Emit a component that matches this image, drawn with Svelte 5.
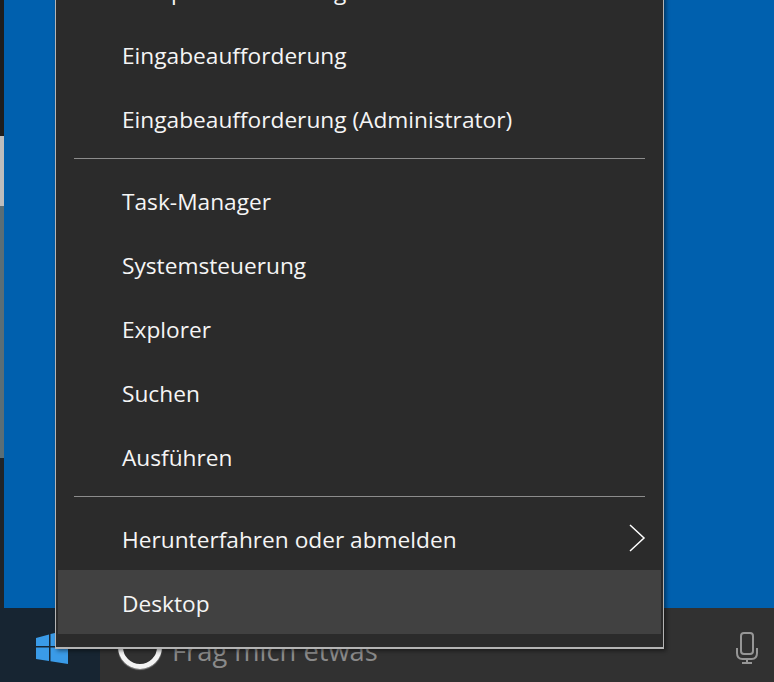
<script>
  const groups = [
    [{ t: 'Computerverwaltung' }, { t: 'Eingabeaufforderung' }, { t: 'Eingabeaufforderung (Administrator)' }],
    [{ t: 'Task-Manager' }, { t: 'Systemsteuerung' }, { t: 'Explorer' }, { t: 'Suchen' }, { t: 'Ausführen' }],
    [{ t: 'Herunterfahren oder abmelden', arrow: true }, { t: 'Desktop', active: true }]
  ];
</script>

<div class="screen">
  <div class="strip">
    <div class="s1"></div>
    <div class="s2"></div>
    <div class="s3"></div>
    <div class="s4"></div>
  </div>
  <div class="desktop"></div>

  <div class="taskbar">
    <div class="start">
      <svg width="34" height="38" viewBox="0 0 34 38"><path fill="#3a9be8" d="M1 12 14 8.500V20H1ZM15.500 8 33 4V20H15.500ZM1 21.500H14V35L1 33ZM15.500 21.500H33V38L15.500 35.300Z"/></svg>
    </div>
    <div class="search">
      <span class="ring"></span>
      <span class="prompt">Frag mich etwas</span>
      <svg class="mic" width="22" height="32" viewBox="0 0 22 32" fill="none" stroke="#969696" stroke-width="2"><rect x="5" y="1" width="12" height="21" rx="3"/><path d="M1 16v5c0 4 2.500 6 5.500 6h9c3 0 5.500-2 5.500-6v-5M11 27v4M6 31h10"/></svg>
    </div>
  </div>

  <div class="menu">
    {#each groups as g, i}
      {#if i > 0}<div class="sep"></div>{/if}
      {#each g as item}
        <div class="item" class:active={item.active}>
          <span>{item.t}</span>
          {#if item.arrow}
            <svg class="arrow" width="18" height="30" viewBox="0 0 18 30" fill="none" stroke="#fff" stroke-width="1.500"><path d="M2 2 16 15 2 28"/></svg>
          {/if}
        </div>
      {/each}
    {/each}
  </div>
</div>

<style>
  :global(body) { margin: 0; background: #0060ae; }
  .screen { position: relative; width: 774px; height: 682px; overflow: hidden; background: #0060ae; display: flex; flex-direction: column; }
  .strip { position: absolute; left: 0; top: 0; bottom: 0; width: 4px; display: flex; flex-direction: column; }
  .s1 { height: 136px; background: #1e1e1e; }
  .s2 { height: 70px; background: #bdbdbd; }
  .s3 { height: 252px; background: #5a6e76; }
  .s4 { flex: 1; background: #202428; }
  .desktop { flex: 1; }
  .taskbar { height: 74px; display: flex; position: relative; }
  .start { width: 100px; background: #172532; display: flex; align-items: center; justify-content: center; padding-left: 4px; box-sizing: border-box; }
  .search { flex: 1; background: #313131; display: flex; align-items: flex-end; position: relative; }
  .ring { width: 44px; height: 44px; border: 5.5px solid #f4f4f4; border-radius: 50%; box-sizing: border-box; margin: 0 0 13px 18px; flex: none; box-shadow: 0 1px 1px #8a8a8a; }
  .prompt { font: 27.3px "Open Sans", "Noto Sans", sans-serif; color: #8a8a8a; margin: 0 0 13px 10px; line-height: 36px; }
  .mic { position: absolute; right: 16px; top: 24px; }
  .menu {
    position: absolute; left: 55px; top: -43px; width: 609px; height: 692px;
    box-sizing: border-box; border: solid #b4b4b4; border-width: 1px 1px 2px 1px;
    background: #2b2b2b; padding: 0 2px; box-shadow: 2px 2px 4px rgba(0,0,0,.45);
    display: flex; flex-direction: column;
  }
  .item { height: 64px; box-sizing: border-box; padding-top: 2px; flex: none; display: flex; align-items: center; padding-left: 64px; font: 22.7px "Open Sans", "Noto Sans", sans-serif; color: #f5f5f5; position: relative; }
  .sep { height: 1px; background: #8c8c8c; margin: 8px 16px 9px; flex: none; }
  .active { background: #414141; }
  .arrow { position: absolute; right: 15px; top: 17px; }
</style>
